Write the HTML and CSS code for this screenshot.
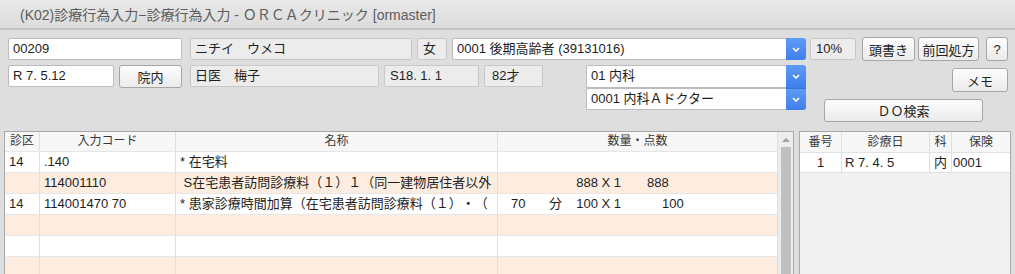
FILE: index.html
```html
<!DOCTYPE html>
<html lang="ja">
<head>
<meta charset="utf-8">
<title>(K02)診療行為入力</title>
<link rel="stylesheet" href="styles.css">
</head>
<body>
<div class="titlebar"><span class="title">(K02)診療行為入力−診療行為入力 - ＯＲＣＡクリニック [ormaster]</span></div>

<div class="form">
  <div class="row1">
    <div class="field entry w-id">00209</div>
    <div class="field ro w-kana">ニチイ　ウメコ</div>
    <div class="field ro w-sex">女</div>
    <div class="combo w-ins">
      <div class="combo-text">0001 後期高齢者 (39131016)</div>
      <div class="combo-btn"><svg width="8" height="5" viewBox="0 0 8 5"><path d="M1 1 L4 4 L7 1" fill="none" stroke="#fff" stroke-width="1.6"/></svg></div>
    </div>
    <div class="field ro w-rate">10%</div>
    <button class="btn w-head">頭書き</button>
    <button class="btn w-prev">前回処方</button>
    <button class="btn w-help">?</button>
  </div>

  <div class="row2">
    <div class="left2">
      <div class="field entry w-date">R 7. 5.12</div>
      <button class="btn w-in">院内</button>
      <div class="field ro w-name">日医　梅子</div>
      <div class="field ro w-birth">S18. 1. 1</div>
      <div class="field ro w-age">82才</div>
    </div>
    <div class="dept">
      <div class="combo c1">
        <div class="combo-text">01 内科</div>
        <div class="combo-btn top"><svg width="8" height="5" viewBox="0 0 8 5"><path d="M1 1 L4 4 L7 1" fill="none" stroke="#fff" stroke-width="1.6"/></svg></div>
      </div>
      <div class="combo c2">
        <div class="combo-text">0001 内科Ａドクター</div>
        <div class="combo-btn bottom"><svg width="8" height="5" viewBox="0 0 8 5"><path d="M1 1 L4 4 L7 1" fill="none" stroke="#fff" stroke-width="1.6"/></svg></div>
      </div>
    </div>
    <div class="actions">
      <button class="btn w-memo">メモ</button>
      <button class="btn w-do">ＤＯ検索</button>
    </div>
  </div>
</div>

<div class="panels">
  <div class="lpanel">
    <div class="ltable">
      <div class="trow thead">
        <div>診区</div><div>入力コード</div><div>名称</div><div>数量・点数</div>
      </div>
      <div class="trow">
        <div>14</div><div>.140</div><div>* 在宅料</div><div></div>
      </div>
      <div class="trow peach">
        <div></div><div>114001110</div><div> S在宅患者訪問診療料（１）１（同一建物居住者以外</div>
        <div class="qty"><span class="q1"></span><span class="q2"></span><span class="q3">888 X 1</span><span class="q4 pt-a">888</span></div>
      </div>
      <div class="trow">
        <div>14</div><div>114001470 70</div><div>* 患家診療時間加算（在宅患者訪問診療料（１）・（</div>
        <div class="qty"><span class="q1">70</span><span class="q2">分</span><span class="q3">100 X 1</span><span class="q4 pt-b">100</span></div>
      </div>
      <div class="trow peach"><div></div><div></div><div></div><div></div></div>
      <div class="trow"><div></div><div></div><div></div><div></div></div>
      <div class="trow peach"><div></div><div></div><div></div><div></div></div>
    </div>
    <div class="vscroll">
      <div class="arrow"><svg width="8" height="5" viewBox="0 0 8 5"><path d="M0 5 L4 1 L8 5 Z" fill="#a0a0a0"/></svg></div>
      <div class="thumb"></div>
    </div>
  </div>

  <div class="rpanel">
    <div class="rrow rhead">
      <div>番号</div><div>診療日</div><div>科</div><div>保険</div>
    </div>
    <div class="rrow rdata">
      <div class="center">1</div><div>R 7. 4. 5</div><div>内</div><div>0001</div>
    </div>
  </div>
</div>
</body>
</html>
```

FILE: styles.css
```css
* { box-sizing: border-box; }

body {
  margin: 0;
  width: 1015px;
  height: 274px;
  overflow: hidden;
  background: #dedede;
  font-family: "Liberation Sans", "Noto Sans CJK JP", sans-serif;
  font-size: 13px;
  color: #1e1e1e;
  text-spacing-trim: space-all;
}

.titlebar {
  height: 30px;
  padding-left: 20px;
  display: flex;
  align-items: center;
  background: linear-gradient(#e8e8e8, #dcdcdc);
  border-bottom: 2px solid #c4c4c4;
  font-size: 14px;
  color: #5c5c5c;
}

.form {
  padding: 7px 0 0 8px;
}

.row1 {
  display: flex;
  align-items: center;
  height: 24px;
}

.field {
  height: 22px;
  border: 1px solid #bcbcbc;
  border-radius: 2px;
  padding-left: 4px;
  line-height: 20px;
  white-space: nowrap;
  overflow: hidden;
}

.entry { background: #fff; }
.ro { background: #ececec; border-color: #c8c8c8; }

.w-id { width: 174px; }
.w-kana { width: 222px; margin-left: 8px; }
.w-sex { width: 30px; margin-left: 5px; padding-left: 5px; }
.w-ins { width: 354px; margin-left: 5px; }
.w-rate { width: 46px; margin-left: 4px; padding-left: 5px; }
.w-head { width: 53px; margin-left: 6px; }
.w-prev { width: 61px; margin-left: 3px; }
.w-help { width: 22px; margin-left: 7px; }

.btn {
  height: 24px;
  padding: 0;
  border: 1px solid #a6a6a6;
  border-radius: 3px;
  background: linear-gradient(#fdfdfd, #ebebeb);
  font-family: inherit;
  font-size: 13px;
  color: #222;
  text-align: center;
  white-space: nowrap;
  text-spacing-trim: space-all;
}

.combo {
  display: flex;
  height: 22px;
}

.combo-text {
  flex: 1;
  border: 1px solid #bcbcbc;
  border-right: none;
  border-radius: 2px 0 0 2px;
  background: #fff;
  padding-left: 4px;
  line-height: 20px;
  white-space: nowrap;
  overflow: hidden;
}

.combo-btn {
  width: 20px;
  display: flex;
  align-items: center;
  justify-content: center;
  background: linear-gradient(#5e9af6, #3f7fec);
  border-radius: 0 3px 3px 0;
}

.combo-btn.top { border-radius: 0 3px 0 0; }
.combo-btn.bottom { border-radius: 0 0 3px 0; border-top: 1px solid #3a74d6; }

.row2 {
  display: flex;
  align-items: flex-start;
  margin-top: 4px;
}

.left2 {
  display: flex;
  align-items: flex-start;
}

.w-date { width: 106px; }
.w-in { width: 63px; height: 23px; margin-left: 5px; }
.w-name { width: 189px; margin-left: 8px; }
.w-birth { width: 95px; margin-left: 5px; padding-left: 5px; }
.w-age { width: 59px; margin-left: 5px; padding-left: 7px; }

.dept {
  width: 220px;
  margin-left: 43px;
  display: flex;
  flex-direction: column;
}

.c1 { height: 23px; }
.c2 { height: 22px; }

.actions {
  width: 184px;
  margin-left: 18px;
  display: flex;
  flex-direction: column;
}

.w-memo { width: 56px; margin-top: 3px; align-self: flex-end; }
.w-do { width: 159px; height: 23px; margin-top: 7px; }

.panels {
  display: flex;
  gap: 5px;
  margin-top: 9px;
  padding-left: 4px;
  height: 160px;
}

.lpanel {
  width: 790px;
  display: flex;
  border: 1px solid #a8a8a8;
  background: #ececec;
}

.ltable {
  width: 773px;
  background: #fff;
}

.trow {
  display: grid;
  grid-template-columns: 35px 136px 322px 280px;
  height: 21px;
  border-bottom: 1px solid #e6e6e6;
  background: #fff;
}

.trow > div {
  border-right: 1px solid #dedede;
  padding-left: 4px;
  line-height: 20px;
  white-space: pre;
  overflow: hidden;
}

.trow.peach { background: #fcede0; }

.thead {
  height: 20px;
  background: #f7f7f7;
  font-size: 12px;
  color: #383838;
}

.thead > div {
  text-align: center;
  padding-left: 0;
  line-height: 19px;
}

.qty {
  display: flex;
}

.trow > .qty { padding-left: 13px; }

.q1 { width: 38px; }
.q2 { width: 20px; }
.q3 { width: 52px; text-align: right; }
.pt-a { margin-left: 26px; }
.pt-b { margin-left: 41px; }

.vscroll {
  width: 15px;
  display: flex;
  flex-direction: column;
  background: #ededed;
}

.arrow {
  height: 15px;
  display: flex;
  align-items: center;
  justify-content: center;
}

.thumb {
  flex: 1;
  margin: 0 2px 0 3px;
  background: #c0c0c0;
}

.rpanel {
  width: 212px;
  border: 1px solid #a8a8a8;
  background: #f1f1f1;
}

.rrow {
  display: grid;
  grid-template-columns: 42px 88px 22px 58px;
}

.rrow > div {
  border-right: 1px solid #e0e0e0;
  white-space: nowrap;
  overflow: hidden;
}

.rrow > div:last-child { border-right: none; }

.rhead {
  height: 21px;
  background: #f7f7f7;
  border-bottom: 1px solid #e2e2e2;
  font-size: 12px;
  color: #383838;
}

.rhead > div {
  text-align: center;
  line-height: 20px;
}

.rdata {
  height: 20px;
  background: #fff;
  border-bottom: 1px solid #e2e2e2;
}

.rdata > div {
  line-height: 19px;
  padding-left: 3px;
}

.rdata > div:nth-child(3) { padding-left: 4px; }
.rdata > div:nth-child(4) { padding-left: 1px; }
.rdata > .center { text-align: center; padding-left: 0; }
```
